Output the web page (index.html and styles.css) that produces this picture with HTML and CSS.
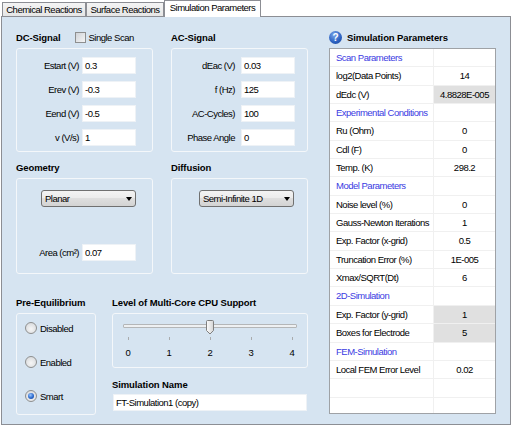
FILE: index.html
```html
<!DOCTYPE html>
<html>
<head>
    <link rel="stylesheet" href="styles.css">
</head>
<body>
    <div class="tabs">
        <div class="tab first">Chemical Reactions</div>
        <div class="tab second">Surface Reactions</div>
        <div class="tab active">Simulation Parameters</div>
    </div>

    <div class="page">
        <div class="left">
            <div class="pair">
                <div class="section">
                    <div class="caption">DC-Signal
                        <span class="check"><span class="checkbox"></span>Single Scan</span>
                    </div>
                    <div class="group signal">
                        <div class="field"><label>Estart (V)</label><div class="input">0.3</div></div>
                        <div class="field"><label>Erev (V)</label><div class="input">-0.3</div></div>
                        <div class="field"><label>Eend (V)</label><div class="input">-0.5</div></div>
                        <div class="field"><label>v (V/s)</label><div class="input">1</div></div>
                    </div>
                </div>
                <div class="section">
                    <div class="caption">AC-Signal</div>
                    <div class="group signal ac">
                        <div class="field"><label>dEac (V)</label><div class="input">0.03</div></div>
                        <div class="field"><label>f (Hz)</label><div class="input">125</div></div>
                        <div class="field"><label>AC-Cycles)</label><div class="input">100</div></div>
                        <div class="field"><label>Phase Angle</label><div class="input">0</div></div>
                    </div>
                </div>
            </div>

            <div class="pair second-row">
                <div class="section">
                    <div class="caption">Geometry</div>
                    <div class="group shape">
                        <div class="combo geo"><span>Planar</span><span class="arrow"></span></div>
                        <div class="field area"><label>Area (cm&sup2;)</label><div class="input">0.07</div></div>
                    </div>
                </div>
                <div class="section">
                    <div class="caption">Diffusion</div>
                    <div class="group shape">
                        <div class="combo diff"><span>Semi-Infinite 1D</span><span class="arrow"></span></div>
                    </div>
                </div>
            </div>

            <div class="bottom">
                <div class="pre">
                    <div class="caption">Pre-Equilibrium</div>
                    <div class="group radios">
                        <div class="radio"><span class="circle"></span>Disabled</div>
                        <div class="radio"><span class="circle"></span>Enabled</div>
                        <div class="radio"><span class="circle on"></span>Smart</div>
                    </div>
                </div>
                <div class="cpu">
                    <div class="caption">Level of Multi-Core CPU Support</div>
                    <div class="group slider">
                        <div class="track">
                            <span class="thumb">
                                <svg width="8" height="15" viewBox="0 0 8 15">
                                    <defs>
                                        <linearGradient id="tg" x1="0" y1="0" x2="1" y2="0">
                                            <stop offset="0" stop-color="#fdfdfd"/>
                                            <stop offset="1" stop-color="#d4d4d4"/>
                                        </linearGradient>
                                    </defs>
                                    <path d="M1.5 0.5 H6.5 Q7.5 0.5 7.5 1.5 V10.5 L4 14 L0.5 10.5 V1.5 Q0.5 0.5 1.5 0.5 Z" fill="url(#tg)" stroke="#7f7f7f"/>
                                </svg>
                            </span>
                        </div>
                        <div class="ticks"><span></span><span></span><span></span><span></span><span></span></div>
                        <div class="scale"><span>0</span><span>1</span><span>2</span><span>3</span><span>4</span></div>
                    </div>
                    <div class="caption tight">Simulation Name</div>
                    <div class="input name">FT-Simulation1 (copy)</div>
                </div>
            </div>
        </div>

        <div class="right">
            <div class="caption"><span class="help">?</span>Simulation Parameters</div>
            <div class="grid">
                <div class="cell cat">Scan Parameters</div><div class="cell"></div>
                <div class="cell">log2(Data Points)</div><div class="cell val">14</div>
                <div class="cell">dEdc (V)</div><div class="cell val grey">4.8828E-005</div>
                <div class="cell cat">Experimental Conditions</div><div class="cell"></div>
                <div class="cell">Ru (Ohm)</div><div class="cell val">0</div>
                <div class="cell">Cdl (F)</div><div class="cell val">0</div>
                <div class="cell">Temp. (K)</div><div class="cell val">298.2</div>
                <div class="cell cat">Model Parameters</div><div class="cell"></div>
                <div class="cell">Noise level (%)</div><div class="cell val">0</div>
                <div class="cell">Gauss-Newton Iterations</div><div class="cell val">1</div>
                <div class="cell">Exp. Factor (x-grid)</div><div class="cell val">0.5</div>
                <div class="cell">Truncation Error (%)</div><div class="cell val">1E-005</div>
                <div class="cell">Xmax/SQRT(Dt)</div><div class="cell val">6</div>
                <div class="cell cat">2D-Simulation</div><div class="cell"></div>
                <div class="cell">Exp. Factor (y-grid)</div><div class="cell val grey">1</div>
                <div class="cell">Boxes for Electrode</div><div class="cell val grey">5</div>
                <div class="cell cat">FEM-Simulation</div><div class="cell"></div>
                <div class="cell">Local FEM Error Level</div><div class="cell val">0.02</div>
                <div class="cell"></div><div class="cell"></div>
                <div class="cell"></div><div class="cell"></div>
            </div>
        </div>
    </div>
</body>
</html>
```

FILE: styles.css
```css
body {
    margin: 0;
    background: #fff;
    font-family: "Liberation Sans", Arial, sans-serif;
    font-size: 9.5px;
    letter-spacing: -0.5px;
    color: #000;
}

/* tab strip */
.tabs {
    display: flex;
    align-items: flex-end;
    height: 16px;
    padding-left: 2px;
}

.tab {
    box-sizing: border-box;
    height: 14px;
    line-height: 13px;
    text-align: center;
    border: 1px solid #8c8e94;
    border-bottom: none;
    background: linear-gradient(#f4f4f4, #e6e6e6);
}

.tab.first {
    width: 84px;
}

.tab.second {
    width: 78px;
    margin-left: 0;
}

.tab.active {
    position: relative;
    z-index: 1;
    width: 97px;
    height: 17px;
    margin-bottom: -1px;
    background: #fff;
    line-height: 14px;
}

/* tab page */
.page {
    box-sizing: border-box;
    display: flex;
    width: 510px;
    height: 409px;
    margin-left: 1px;
    padding: 11px 0 0 14px;
    border: 1px solid #8c8e94;
    background: #d6e4f1;
}

.left {
    width: 292px;
}

.right {
    width: 167px;
    margin-left: 21px;
}

.caption {
    display: flex;
    align-items: center;
    height: 20px;
    line-height: 19px;
    padding-bottom: 1px;
    box-sizing: border-box;
    font-weight: bold;
    letter-spacing: -0.1px;
}

.caption.tight {
    height: 18px;
    margin-top: 8px;
}

.group {
    box-sizing: border-box;
    border: 1px solid #f4f7fa;
    border-radius: 3px;
}

.pair {
    display: grid;
    grid-template-columns: 137px 137px;
    column-gap: 18px;
}

.second-row {
    margin-top: 6px;
}

/* text fields */
.signal {
    display: flex;
    flex-direction: column;
    gap: 7px;
    height: 104px;
    padding-top: 8px;
}

.field {
    display: flex;
    align-items: center;
    height: 17px;
}

.field label {
    width: 62px;
    margin-right: 3px;
    text-align: right;
}

.ac {
    padding-left: 1px;
}

.ac .field label {
    margin-right: 6px;
}

.input {
    box-sizing: border-box;
    width: 54px;
    height: 17px;
    line-height: 15px;
    padding-left: 2px;
    background: #fff;
    border: 1px solid #eef2f6;
}

/* combos */
.shape {
    height: 96px;
    padding-top: 11px;
}

.combo {
    box-sizing: border-box;
    display: flex;
    align-items: center;
    justify-content: space-between;
    width: 95px;
    height: 17px;
    padding: 0 3px 0 3px;
    border: 1px solid #707070;
    border-radius: 3px;
    background: linear-gradient(#f3f3f3, #ebebeb 50%, #dedede 50%, #d3d3d3);
}

.combo.geo {
    margin-left: 24px;
}

.combo.diff {
    margin-left: 27px;
}

.arrow {
    width: 0;
    height: 0;
    border-left: 3.5px solid transparent;
    border-right: 3.5px solid transparent;
    border-top: 4px solid #000;
}

.area {
    margin-top: 37px;
}

/* bottom row */
.bottom {
    display: flex;
    margin-top: 19px;
}

.pre {
    width: 80px;
}

.radios {
    display: flex;
    flex-direction: column;
    gap: 20px;
    height: 102px;
    padding: 7px 0 0 8px;
}

.radio {
    display: flex;
    align-items: center;
    height: 14px;
}

.circle {
    box-sizing: border-box;
    display: flex;
    align-items: center;
    justify-content: center;
    width: 12px;
    height: 12px;
    margin-right: 3px;
    border: 1px solid #8e8f8f;
    border-radius: 50%;
    background: radial-gradient(circle at 50% 60%, #f6f6f6, #d3d5d8);
}

.circle.on::after {
    content: "";
    width: 6px;
    height: 6px;
    border-radius: 50%;
    background: radial-gradient(circle at 40% 35%, #9cc8ff, #2a68cc 55%, #15428f);
}

.cpu {
    width: 196px;
    margin-left: 16px;
}

.slider {
    height: 55px;
    padding: 10px 0 0 10px;
}

.track {
    position: relative;
    box-sizing: border-box;
    width: 174px;
    height: 4px;
    border: 1px solid #b4b6b8;
    border-radius: 1px;
    background: #eef0f2;
}

.thumb {
    position: absolute;
    left: 82px;
    top: -5px;
    line-height: 0;
}

.ticks,
.scale {
    display: flex;
    justify-content: space-between;
    width: 174px;
}

.ticks {
    height: 3px;
    margin-top: 9px;
}

.ticks span {
    width: 10px;
    background: linear-gradient(#a9abad, #a9abad) center / 1px 100% no-repeat;
}

.scale {
    height: 13px;
    line-height: 13px;
    margin-top: 6px;
}

.scale span {
    width: 10px;
    text-align: center;
}

.input.name {
    width: 194px;
    margin-left: 1px;
}

/* checkbox in caption */
.check {
    display: flex;
    align-items: center;
    margin-left: 14px;
    font-weight: normal;
    letter-spacing: -0.5px;
}

.checkbox {
    box-sizing: border-box;
    width: 11px;
    height: 11px;
    margin-right: 3px;
    border: 1px solid #8e8f8f;
    background: linear-gradient(135deg, #d0d3d8, #f5f5f5);
}

/* property grid */
.help {
    display: flex;
    align-items: center;
    justify-content: center;
    width: 13px;
    height: 13px;
    margin-right: 5px;
    border-radius: 50%;
    background: radial-gradient(circle at 40% 30%, #7aa6ea, #2a5fbf 60%, #1b4594);
    color: #fff;
    font-size: 10px;
    letter-spacing: 0;
}

.grid {
    box-sizing: border-box;
    display: grid;
    grid-template-columns: 104px 61px;
    grid-auto-rows: 18.35px;
    height: 366px;
    overflow: hidden;
    border: 1px solid #9fa2a6;
    background: #fff;
}

.cell {
    box-sizing: border-box;
    padding-left: 6px;
    line-height: 17.35px;
    white-space: nowrap;
    border-bottom: 1px solid #f0f0f0;
}

.cell:nth-child(odd) {
    border-right: 1px solid #f0f0f0;
}

.cat {
    color: #3b3be2;
}

.val {
    padding-left: 0;
    text-align: center;
}

.grey {
    background: #e0e0e0;
}
```
